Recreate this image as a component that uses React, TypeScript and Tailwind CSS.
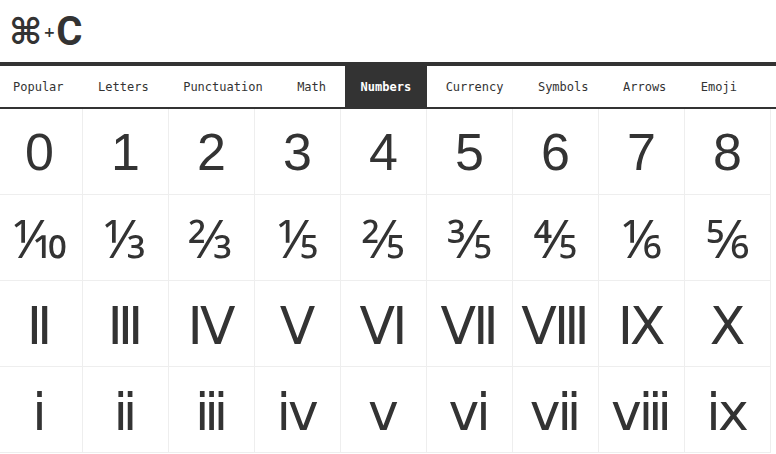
const tabs = [
  "Popular", "Letters", "Punctuation", "Math", "Numbers",
  "Currency", "Symbols", "Arrows", "Emoji"
];

const rows = [
  ["0", "1", "2", "3", "4", "5", "6", "7", "8"],
  ["⅒", "⅓", "⅔", "⅕", "⅖", "⅗", "⅘", "⅙", "⅚"],
  ["Ⅱ", "Ⅲ", "Ⅳ", "Ⅴ", "Ⅵ", "Ⅶ", "Ⅷ", "Ⅸ", "Ⅹ"],
  ["ⅰ", "ⅱ", "ⅲ", "ⅳ", "ⅴ", "ⅵ", "ⅶ", "ⅷ", "ⅸ"]
];

const cell = "h-[86px] flex items-center justify-center border-r border-b border-[#eee] text-[52px] leading-none";

const App = () => {
  return (
    <div className="w-[776px] h-[454px] overflow-hidden bg-white text-[#333]">
      <div className="-ml-[3px] w-[782px]">

        {/* Logo */}
        <header className="h-[62px] flex items-center pl-[12px] pt-[2px]">
          <span className="text-[36px] leading-none font-bold font-['DejaVu_Sans',sans-serif]">⌘</span>
          <span className="text-[14px] leading-none font-bold mx-[1px] font-['DejaVu_Sans',sans-serif]">+</span>
          <span className="text-[40px] leading-none font-bold font-['Liberation_Sans_Narrow','Roboto',sans-serif]">C</span>
        </header>

        {/* Tabs */}
        <nav className="flex gap-[2.5px] border-t-4 border-b-2 border-[#333] h-[47px] font-['DejaVu_Sans_Mono',monospace] text-[12px]">
          {tabs.map((tab) => (
            <a
              key={tab}
              className={
                tab === "Numbers"
                  ? "px-4 flex items-center bg-[#333] text-white font-bold"
                  : "px-4 flex items-center text-[#333]"
              }
            >
              {tab}
            </a>
          ))}
        </nav>

        {/* Characters */}
        <div className="grid grid-cols-[repeat(9,86px)] font-['Liberation_Sans','DejaVu_Sans',sans-serif]">
          {rows.map((row, r) =>
            row.map((ch, i) => (
              <div
                key={`${r}-${i}`}
                className={
                  r === 0
                    ? cell
                    : r === 1
                      ? `${cell} font-['Noto_Sans','DejaVu_Sans',sans-serif]`
                      : `${cell} font-medium font-['Noto_Sans','DejaVu_Sans',sans-serif]`
                }
              >
                {ch}
              </div>
            ))
          )}
        </div>

      </div>
    </div>
  );
};

export default App;
